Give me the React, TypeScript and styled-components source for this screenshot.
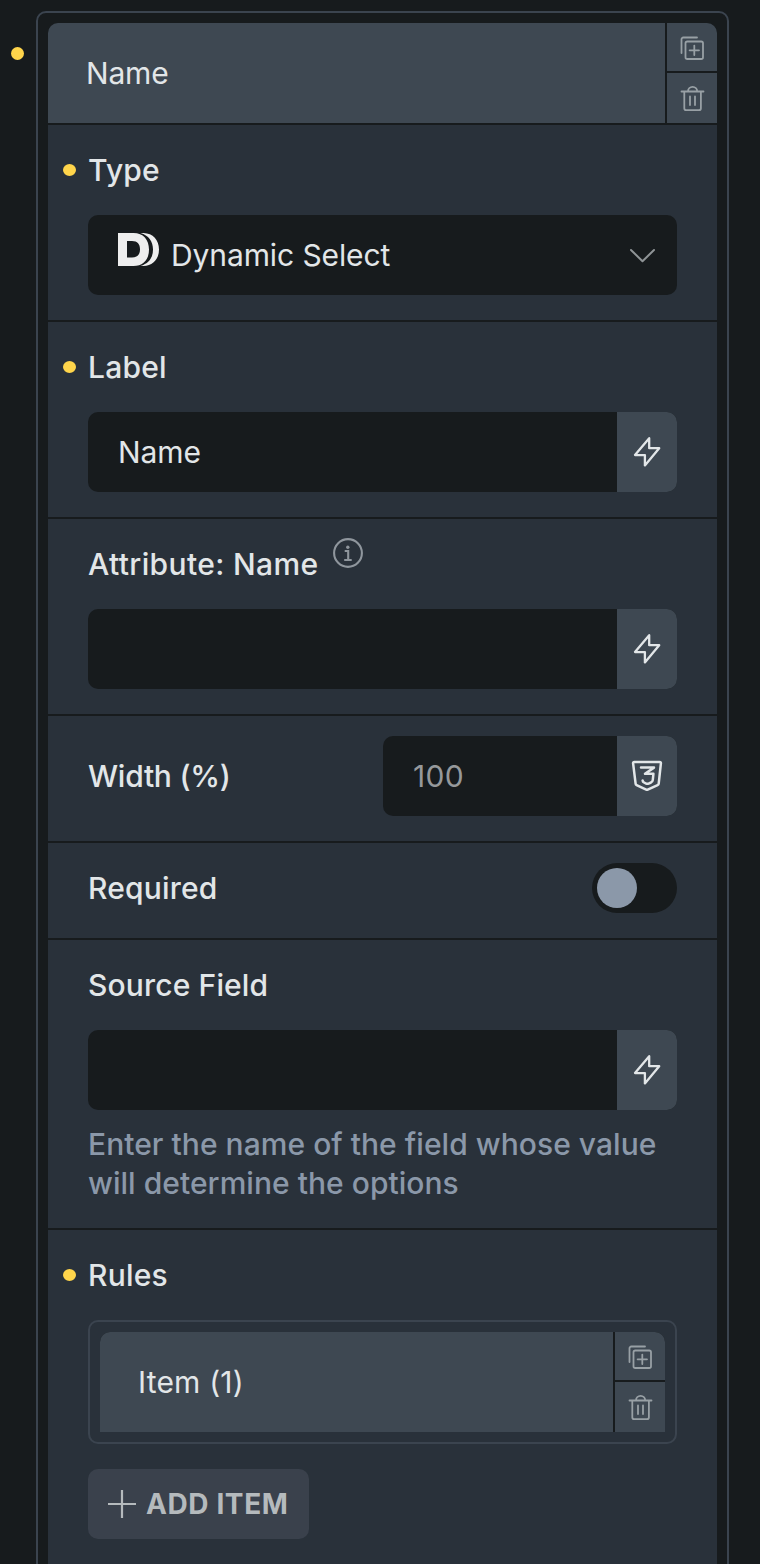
import React from "react";
import styled, { createGlobalStyle } from "styled-components";

const c = {
  dark: "#171b1d",
  panel: "#29313a",
  raised: "#3e4852",
  frame: "#3b444f",
  text: "#e2e6e8",
  muted: "#8b98a9",
  icon: "#98a0a5",
  yellow: "#ffd54b",
};

const Global = createGlobalStyle`
  *, *::before, *::after { box-sizing: border-box; }
  body {
    margin: 0;
    background: ${c.dark};
    color: ${c.text};
    font-family: Inter, "Liberation Sans", sans-serif;
    font-size: 30px;
    overflow: hidden;
  }
  svg { display: block; }
`;

const Page = styled.div`
  height: 1564px;
  padding: 11px 31px 0 36px;
  overflow: hidden;
`;

const Repeater = styled.div`
  position: relative;
  height: 1700px;
  border: 2px solid ${c.frame};
  border-radius: 10px;
  padding: 10px;
`;

const Dot = styled.span`
  position: absolute;
  left: -27px;
  top: 34px;
  width: 13px;
  height: 13px;
  border-radius: 50%;
  background: ${c.yellow};
`;

const SectionDot = styled(Dot)`
  left: 15px;
  top: 39px;
  height: 12px;
`;

const ItemBar = styled.div`
  display: grid;
  grid-template-columns: 1fr 50px;
  column-gap: 2px;
  height: 100px;
  background: ${c.dark};
  border-radius: 10px 10px 0 0;
  overflow: hidden;
`;

const ItemTitle = styled.div<{ $tracking: number }>`
  display: flex;
  align-items: center;
  padding-left: 38px;
  letter-spacing: ${(p) => p.$tracking}px;
  background: ${c.raised};
`;

const ItemActions = styled.div`
  display: grid;
  grid-template-rows: 48px 50px;
  row-gap: 2px;
`;

const ActionButton = styled.button`
  display: flex;
  align-items: center;
  justify-content: center;
  border: 0;
  padding: 2px 0 0 1px;
  background: ${c.raised};
  color: ${c.icon};

  &:first-child {
    padding-top: 4px;
  }
`;

const Section = styled.section`
  position: relative;
  margin-top: 2px;
  padding: 20px 40px 25px;
  background: ${c.panel};
`;

const InlineSection = styled(Section)`
  display: flex;
  align-items: center;
  justify-content: space-between;
`;

const LastSection = styled(Section)`
  height: 500px;
`;

const Label = styled.label<{ $tracking?: number }>`
  display: flex;
  height: 50px;
  align-items: center;
  font-weight: 500;
  letter-spacing: ${(p) => p.$tracking ?? 0.2}px;
`;

const StackedLabel = styled(Label)`
  margin-bottom: 20px;
`;

const InfoMark = styled.span`
  margin: 0 0 22px 14px;
`;

const Field = styled.div<{ $width?: number }>`
  display: flex;
  height: 80px;
  width: ${(p) => (p.$width ? p.$width + "px" : "100%")};
  border-radius: 10px;
  background: ${c.dark};
  overflow: hidden;
`;

const FieldValue = styled.div<{ $placeholder?: boolean }>`
  flex: 1;
  display: flex;
  align-items: center;
  padding-left: 30px;
  letter-spacing: ${(p) => (p.$placeholder ? 0.3 : -0.1)}px;
  color: ${(p) => (p.$placeholder ? "#96999b" : c.text)};
`;

const FieldAddon = styled.div`
  display: flex;
  align-items: center;
  justify-content: center;
  width: 60px;
  background: ${c.raised};
`;

const SelectLogo = styled.span`
  margin: 0 11px 11px 0;
`;

const SelectArrow = styled.span`
  display: flex;
  align-items: center;
  margin-right: 21px;
`;

const Toggle = styled.div`
  width: 85px;
  height: 50px;
  padding: 5px;
  border-radius: 25px;
  background: ${c.dark};
`;

const Knob = styled.div`
  width: 40px;
  height: 40px;
  border-radius: 50%;
  background: ${c.muted};
`;

const Description = styled.p`
  margin: 15px 0 0;
  line-height: 39px;
  font-weight: 500;
  letter-spacing: 0.04px;
  color: ${c.muted};
`;

const NestedRepeater = styled.div`
  height: 124px;
  border: 2px solid ${c.frame};
  border-radius: 10px;
  padding: 10px;
`;

const AddButton = styled.button`
  display: flex;
  align-items: center;
  gap: 10px;
  width: 221px;
  height: 70px;
  margin-top: 25px;
  padding: 0 0 0 20px;
  border: 0;
  border-radius: 10px;
  background: #3a414c;
  color: #b5babd;
  font: 700 28px Inter, "Liberation Sans", sans-serif;
  letter-spacing: 0.6px;
  white-space: nowrap;
`;

const DuplicateIcon = () => (
  <svg width="26" height="26" viewBox="0 0 26 26" fill="none" stroke="currentColor" strokeWidth="1.8" strokeLinecap="round" strokeLinejoin="round">
    <rect x="5.500" y="5.500" width="17.500" height="17.500" rx="1.800" />
    <path d="M1.500 17V3.300a1.800 1.800 0 0 1 1.800-1.800H17M14.300 9.600v9.400M9.600 14.300h9.400" />
  </svg>
);

const TrashIcon = () => (
  <svg width="26" height="26" viewBox="0 0 26 26" fill="none" stroke="currentColor" strokeWidth="1.8" strokeLinecap="round" strokeLinejoin="round">
    <path d="M1.500 5.500h22M4.300 5.500v16.700a2 2 0 0 0 2 2h12.600a2 2 0 0 0 2-2V5.500M8 5.500a4.600 4.600 0 0 1 9.200 0M10 10.500v8.500M15 10.500v8.500" />
  </svg>
);

const BoltIcon = () => (
  <svg width="30" height="32" viewBox="0 0 30 32" fill="none" stroke={c.text} strokeWidth="2.3" strokeLinejoin="round">
    <path d="M17.200 2.200v10h10L12.900 29.400V19.100H3L17.200 2.200Z" />
  </svg>
);

const Css3Icon = () => (
  <svg width="32" height="32" viewBox="0 0 32 32" fill="none" stroke={c.text} strokeWidth="2.5" strokeLinecap="round" strokeLinejoin="round">
    <path d="M3.300 2h25.400a1.200 1.200 0 0 1 1.200 1.400l-2.200 20.300a1.800 1.800 0 0 1-1.100 1.500L16.700 29.700a2 2 0 0 1-1.500 0L5.600 25.200a1.800 1.800 0 0 1-1-1.500L2.100 3.400A1.200 1.200 0 0 1 3.300 2Z" />
    <path d="M10 7.600h13l-9 6.200h8.400l-.6 6.200c-.1 1.200-.8 2-1.800 2.500l-2.400 1.100a3 3 0 0 1-2.400 0l-2.200-1.100a2.500 2.500 0 0 1-1.400-2" />
  </svg>
);

const InfoIcon = () => (
  <svg width="30" height="30" viewBox="0 0 30 30" fill="none" stroke="#8f969d" strokeWidth="2.100">
    <circle cx="15" cy="15" r="13.900" />
    <path d="M11.700 13h3.500v9M11.200 22h7.500" />
    <circle cx="14.800" cy="9.200" r="1.700" fill="#8f969d" stroke="none" />
  </svg>
);

const LogoIcon = () => (
  <svg width="42" height="34" viewBox="0 0 42 34" fill="#eeeeee">
    <path fillRule="evenodd" d="M0 0h15.500C25.300 0 31 6.500 31 16.500S25.300 33 15.500 33H0ZM9 8v16.500h5C19.500 24.500 22 21.500 22 16.300S19.500 8 14 8Z" />
    <path d="M22.500 0h3C35 .3 41 7 41 16.500S35 32.700 25.500 33h-3C30.500 30.500 35 25 35 16.500S30.500 2.500 22.500 0Z" />
  </svg>
);

const ChevronIcon = () => (
  <svg width="27" height="15" viewBox="0 0 27 15" fill="none" stroke="#8f9496" strokeWidth="2" strokeLinecap="round" strokeLinejoin="round">
    <path d="M2 2 13.500 13.200 25 2" />
  </svg>
);

const PlusIcon = () => (
  <svg width="28" height="28" viewBox="0 0 28 28" fill="none" stroke="currentColor" strokeWidth="2.200">
    <path d="M14 0v28M0 14h28" />
  </svg>
);

function ItemHeader({ title, tracking = 0 }: { title: string; tracking?: number }) {
  return (
    <ItemBar>
      <ItemTitle $tracking={tracking}>{title}</ItemTitle>
      <ItemActions>
        <ActionButton aria-label="Duplicate"><DuplicateIcon /></ActionButton>
        <ActionButton aria-label="Delete"><TrashIcon /></ActionButton>
      </ItemActions>
    </ItemBar>
  );
}

function DynamicField({ value }: { value?: string }) {
  return (
    <Field>
      <FieldValue>{value}</FieldValue>
      <FieldAddon><BoltIcon /></FieldAddon>
    </Field>
  );
}

export default function App() {
  return (
    <>
      <Global />
      <Page>
        <Repeater>
          <Dot />
          <ItemHeader title="Name" tracking={-0.2} />

          <Section>
            <SectionDot />
            <StackedLabel>Type</StackedLabel>
            <Field>
              <FieldValue>
                <SelectLogo><LogoIcon /></SelectLogo>
                Dynamic Select
              </FieldValue>
              <SelectArrow><ChevronIcon /></SelectArrow>
            </Field>
          </Section>

          <Section>
            <SectionDot />
            <StackedLabel>Label</StackedLabel>
            <DynamicField value="Name" />
          </Section>

          <Section>
            <StackedLabel $tracking={0.37}>
              Attribute: Name
              <InfoMark><InfoIcon /></InfoMark>
            </StackedLabel>
            <DynamicField />
          </Section>

          <InlineSection>
            <Label $tracking={-0.25}>Width (%)</Label>
            <Field $width={294}>
              <FieldValue $placeholder>100</FieldValue>
              <FieldAddon><Css3Icon /></FieldAddon>
            </Field>
          </InlineSection>

          <InlineSection>
            <Label>Required</Label>
            <Toggle><Knob /></Toggle>
          </InlineSection>

          <Section>
            <StackedLabel $tracking={0.15}>Source Field</StackedLabel>
            <DynamicField />
            <Description>
              Enter the name of the field whose value will determine the options
            </Description>
          </Section>

          <LastSection>
            <SectionDot />
            <StackedLabel>Rules</StackedLabel>
            <NestedRepeater>
              <ItemHeader title="Item (1)" tracking={0.2} />
            </NestedRepeater>
            <AddButton><PlusIcon />ADD ITEM</AddButton>
          </LastSection>
        </Repeater>
      </Page>
    </>
  );
}
